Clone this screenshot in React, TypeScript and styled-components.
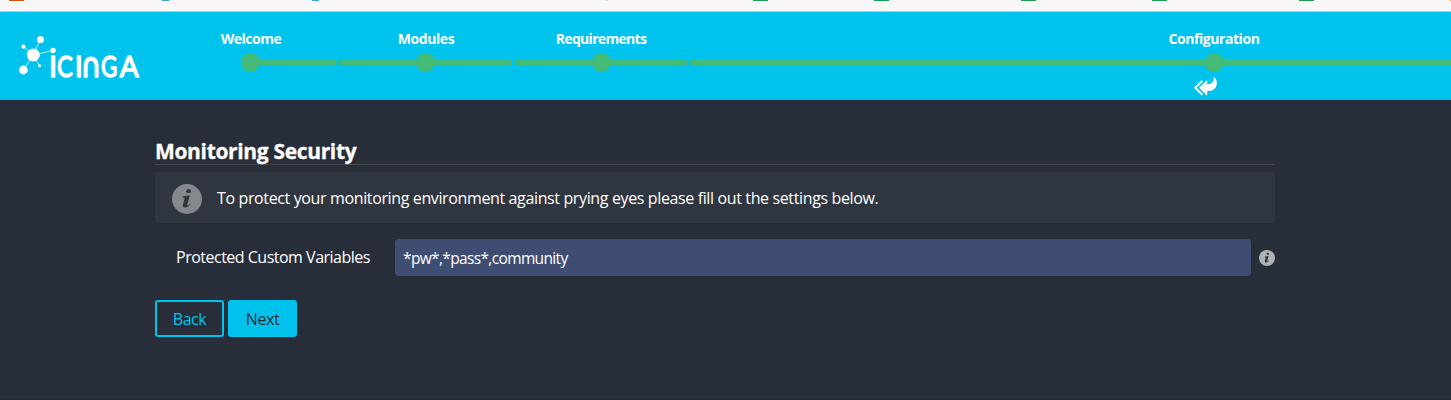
import React from "react";
import styled, { createGlobalStyle } from "styled-components";

const GlobalStyle = createGlobalStyle`
  * { box-sizing: border-box; }
  body {
    margin: 0;
    background: #282e39;
    color: #fff;
    font-family: "Open Sans", "Noto Sans", sans-serif;
    font-size: 16px;
    overflow: hidden;
  }
`;

const Page = styled.div`
  height: 400px;
  overflow: hidden;
  border-bottom: 1px solid #232833;
`;

const Bookmarks = styled.div`
  display: flex;
  height: 12px;
  background: #f7f7f7;
  border-bottom: 1px solid #c3c8ca;
`;

const Favicon = styled.span<{ $gap: number; $color: string; $width?: number }>`
  flex: none;
  width: ${(p) => p.$width ?? 15}px;
  height: 1px;
  margin-left: ${(p) => p.$gap}px;
  background: ${(p) => p.$color};
`;

const Header = styled.header`
  display: flex;
  height: 88px;
  background: #00c3ed;
  overflow: hidden;
`;

const Logo = styled.svg`
  flex: none;
  width: 165px;
  height: 88px;
  font-family: Lato, sans-serif;
`;

const Steps = styled.ol`
  display: flex;
  flex: none;
  gap: 3px;
  margin: 0;
  padding: 0;
  list-style: none;
`;

const Step = styled.li<{ $width: number }>`
  display: flex;
  flex-direction: column;
  align-items: center;
  flex: none;
  width: ${(p) => p.$width}px;
  padding-top: 17px;
`;

const StepLabel = styled.span<{ $spacing: number }>`
  height: 24px;
  font-size: 14px;
  font-weight: 700;
  line-height: 20px;
  white-space: nowrap;
  letter-spacing: ${(p) => p.$spacing}px;
`;

const Track = styled.div<{ $first?: boolean; $nudge: number }>`
  display: grid;
  place-items: center;
  width: 100%;
  height: 19px;

  &::before,
  &::after {
    content: "";
    grid-area: 1 / 1;
    background: #44bb77;
  }
  &::before {
    justify-self: end;
    width: ${(p) => (p.$first ? "50%" : "100%")};
    height: 7px;
    border-radius: 4px;
  }
  &::after {
    width: 19px;
    height: 19px;
    margin-right: ${(p) => p.$nudge}px;
    border-radius: 50%;
  }
`;

const CurrentMark = styled.svg`
  width: 24px;
  height: 21px;
  margin: 4px 16px 0 0;
`;

const Content = styled.main`
  display: flex;
  flex-direction: column;
  width: 1120px;
  margin: 37px 0 0 155px;
`;

const Title = styled.h1`
  height: 28px;
  margin: 0 0 7px;
  border-bottom: 1px solid #4a4a4c;
  font-size: 21px;
  font-weight: 700;
  line-height: 29px;
  letter-spacing: -0.34px;
  white-space: nowrap;
  -webkit-text-stroke: 0.3px #fff;
`;

const Notice = styled.div`
  display: flex;
  align-items: center;
  gap: 15px;
  height: 51px;
  padding-left: 17px;
  padding-top: 3px;
  border-radius: 4px;
  background: #30363f;
`;

const NoticeText = styled.p`
  margin: 0 0 3px;
  letter-spacing: -0.37px;
  white-space: nowrap;
`;

const Field = styled.div`
  display: flex;
  align-items: center;
  height: 37px;
  margin-top: 16px;
`;

const Label = styled.label`
  width: 240px;
  padding: 0 0 1px 21px;
  letter-spacing: -0.5px;
  white-space: nowrap;
`;

const Input = styled.input`
  width: 856px;
  height: 37px;
  margin-right: 8px;
  padding: 1px 8px 0;
  border: 0;
  border-radius: 4px;
  outline: 0;
  background: #404d72;
  color: #fff;
  font: inherit;
  font-size: 15.5px;
  letter-spacing: -0.65px;
`;

const Buttons = styled.div`
  display: flex;
  gap: 4px;
  margin-top: 24px;
`;

const Button = styled.button<{ $primary?: boolean }>`
  width: 69px;
  height: 37px;
  padding: 1px 0 0;
  border: 2px solid #00c3ed;
  border-radius: 3px;
  background: ${(p) => (p.$primary ? "#00c3ed" : "transparent")};
  color: ${(p) => (p.$primary ? "#282e39" : "#00c3ed")};
  font: inherit;
  letter-spacing: -0.45px;
`;

const InfoIcon = ({ size, color, mark }: { size: number; color: string; mark: string }) => (
  <svg width={size} height={size} viewBox="0 0 30 30">
    <circle cx="15" cy="15" r="15" fill={color} />
    <g fill={mark}>
      <ellipse cx="16.6" cy="7.2" rx="2.4" ry="2.1" />
      <path d="M10.4 12.6 L17.8 11.2 L15.2 20.6 Q15 21.7 16.2 21 L18 19.7 L18.4 20.3 Q15.6 23.7 12.6 23.6 Q10.2 23.4 11 20.5 L12.6 14.6 Q12.8 13.6 10.3 13.5 Z" />
    </g>
  </svg>
);

const IcingaLogo = () => (
  <Logo viewBox="0 12 165 88" role="img" aria-label="Icinga">
    <g stroke="#fff" strokeWidth="0.7">
      <path d="M33 55 L40.5 39.5 M33 55 L23.5 46.5 M33 55 L53 50.5 M33 55 L23.5 70 M33 55 L39.7 66" />
    </g>
    <g fill="#fff">
      <circle cx="33.3" cy="55" r="6.5" />
      <circle cx="40.5" cy="39.5" r="3.5" />
      <circle cx="23.5" cy="46.7" r="2.1" />
      <circle cx="53" cy="50.5" r="2.7" />
      <circle cx="23.4" cy="70" r="4.4" />
      <circle cx="39.6" cy="65.8" r="1.5" />
    </g>
    <g fill="#fff" stroke="#fff" strokeWidth="1.4" strokeLinejoin="round" fontSize="28.5">
      <text x="49" y="77">I</text>
      <text transform="translate(57 77) scale(0.83 1)">C</text>
      <text x="74.8" y="77">I</text>
      <text transform="translate(80.8 77) scale(1.08 1.29)" fontFamily="DejaVu Sans" fontSize="26">∩</text>
      <text transform="translate(101 77) scale(0.78 1)">G</text>
      <text transform="translate(119.7 77) scale(0.98 1)">A</text>
    </g>
  </Logo>
);

const favicons = [
  { gap: 9, color: "#d4500f" },
  { gap: 138, color: "#3d9fd0", width: 7 },
  { gap: 143, color: "#3d9fd0", width: 7 },
  { gap: 286, color: "#c9e9e6", width: 3 },
  { gap: 145, color: "#1a9c5b" },
  { gap: 106, color: "#1a9c5b" },
  { gap: 132, color: "#1a9c5b" },
  { gap: 116, color: "#1a9c5b" },
  { gap: 132, color: "#1a9c5b" },
  { gap: 136, color: "#f08a3c", width: 2 },
];

const steps = [
  { label: "Welcome", width: 172, spacing: -0.5, nudge: 1 },
  { label: "Modules", width: 172, spacing: -0.4, nudge: 1 },
  { label: "Requirements", width: 172, spacing: -0.7, nudge: 0 },
  { label: "Configuration", width: 1048, spacing: -0.45, nudge: 0 },
];

export default function App() {
  return (
    <Page>
      <GlobalStyle />
      <Bookmarks>
        {favicons.map((f, i) => (
          <Favicon key={i} $gap={f.gap} $color={f.color} $width={f.width} />
        ))}
      </Bookmarks>
      <Header>
        <IcingaLogo />
        <Steps>
          {steps.map((s, i) => (
            <Step key={s.label} $width={s.width}>
              <StepLabel $spacing={s.spacing}>{s.label}</StepLabel>
              <Track $first={i === 0} $nudge={s.nudge} />
              {s.label === "Configuration" && (
                <CurrentMark viewBox="0 0 24 21" fill="#fff">
                  <path d="M5 11.8 L13.2 3.9 V8.5 Q20.5 8.2 19.8 0.8 Q23.3 3.6 22.8 8.4 Q21.6 15.3 13.2 15 V19.8 Z" />
                  <path d="M8.4 4.7 L1.2 11.8 L8.4 18.9" fill="none" stroke="#fff" strokeWidth="1.9" />
                </CurrentMark>
              )}
            </Step>
          ))}
        </Steps>
      </Header>
      <Content>
        <Title>Monitoring Security</Title>
        <Notice>
          <InfoIcon size={30} color="#85888d" mark="#30363f" />
          <NoticeText>
            To protect your monitoring environment against prying eyes please fill out the settings below.
          </NoticeText>
        </Notice>
        <Field>
          <Label htmlFor="protected">Protected Custom Variables</Label>
          <Input id="protected" defaultValue="*pw*,*pass*,community" />
          <InfoIcon size={16} color="#afb1b5" mark="#282e39" />
        </Field>
        <Buttons>
          <Button>Back</Button>
          <Button $primary>Next</Button>
        </Buttons>
      </Content>
    </Page>
  );
}
